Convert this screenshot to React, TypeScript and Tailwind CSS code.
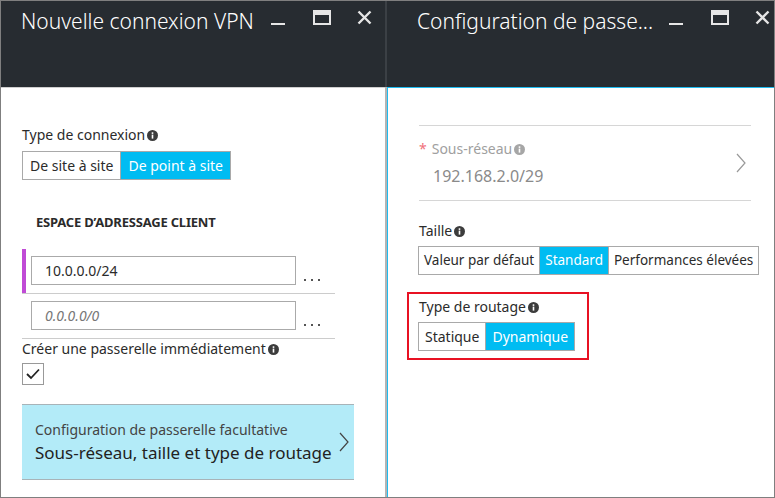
import React from "react";

const FONT = { fontFamily: '"Noto Sans", "Open Sans", sans-serif' };

function Info({ gray = false }: { gray?: boolean }) {
  return (
    <svg width="11" height="11" viewBox="0 0 11 11" className="inline-block ml-[2px]">
      <circle cx="5.5" cy="5.5" r="5.5" fill={gray ? "#a6a6a6" : "#3c3c3c"} />
      <rect x="4.7" y="4.6" width="1.6" height="4" fill="#fff" />
      <rect x="4.7" y="2.3" width="1.6" height="1.6" fill="#fff" />
    </svg>
  );
}

function Chevron({ color = "#333" }: { color?: string }) {
  return (
    <svg width="10" height="20" viewBox="0 0 10 20">
      <path d="M1 1 L9 10 L1 19" fill="none" stroke={color} strokeWidth="1.2" />
    </svg>
  );
}

function WindowButtons() {
  return (
    <div className="flex items-start shrink-0">
      <svg width="14" height="26" viewBox="0 0 14 26" className="mr-[28px]">
        <rect x="0" y="22" width="14" height="2" fill="#e6e6e6" />
      </svg>
      <svg width="18" height="26" viewBox="0 0 18 26" className="mr-[26px]">
        <rect x="1" y="10" width="16" height="13" fill="none" stroke="#e6e6e6" strokeWidth="2" />
        <rect x="1" y="10" width="16" height="4" fill="#e6e6e6" />
      </svg>
      <svg width="15" height="26" viewBox="0 0 15 26">
        <path d="M1.5 10.5 L13.5 22.5 M13.5 10.5 L1.5 22.5" stroke="#e6e6e6" strokeWidth="2.4" />
      </svg>
    </div>
  );
}

function Header({ title, pad }: { title: string; pad: string }) {
  return (
    <div className={"h-[86px] bg-[#272c31] flex items-start justify-between " + pad}>
      <div className="text-[21px] font-light text-white leading-[30px] mt-[5px] whitespace-nowrap">{title}</div>
      <WindowButtons />
    </div>
  );
}

function Segmented({ items, active, size = "text-[14px] px-[7px]" }: { items: string[]; active: number; size?: string }) {
  return (
    <div className="flex">
      {items.map((it, i) => (
        <div
          key={it}
          className={
            "h-[29px] flex items-center border border-[#a9a9a9] whitespace-nowrap " +
            size +
            (i > 0 ? " -ml-px" : "") +
            (i === active ? " bg-[#00bcf2] text-white" : " bg-white text-[#2b2b2b]")
          }
        >
          {it}
        </div>
      ))}
    </div>
  );
}

function Dots() {
  return (
    <div className="flex gap-[5px] items-end h-[28px] pb-[3px] ml-[8px]">
      <span className="w-[2px] h-[2px] bg-[#555]" />
      <span className="w-[2px] h-[2px] bg-[#555]" />
      <span className="w-[2px] h-[2px] bg-[#555]" />
    </div>
  );
}

function LeftPanel() {
  return (
    <div className="w-[384px] shrink-0 flex flex-col">
      <Header title="Nouvelle connexion VPN" pad="pl-[20px] pr-[13px]" />
      <div className="flex-1 border-t border-[#cfcfcf] bg-white pl-[21px] text-[#2b2b2b]">
        <div className="mt-[37px] text-[14px] leading-[20px] flex items-center">
          Type de connexion
          <Info />
        </div>
        <div className="mt-[6px]">
          <Segmented items={["De site à site", "De point à site"]} active={1} />
        </div>
        <div className="mt-[34px] ml-[14px] text-[13px] font-bold leading-[16px] tracking-[-0.2px]">
          ESPACE D’ADRESSAGE CLIENT
        </div>
        <div className="mt-[19px] w-[313px]">
          <div className="flex border-b border-[#cccccc] h-[45px]">
            <div className="w-[4px] bg-[#c04bd6]" />
            <div className="flex items-start pt-[7px] pl-[5px]">
              <div className="w-[265px] h-[29px] border border-[#aaaaaa] px-[13px] flex items-center text-[14px]">
                10.0.0.0/24
              </div>
              <Dots />
            </div>
          </div>
          <div className="flex border-b border-[#cccccc] h-[45px]">
            <div className="w-[4px]" />
            <div className="flex items-start pt-[7px] pl-[5px]">
              <div className="w-[265px] h-[29px] border border-[#aaaaaa] px-[13px] flex items-center text-[14px] italic text-[#777]">
                0.0.0.0/0
              </div>
              <Dots />
            </div>
          </div>
        </div>
        <div className="mt-0 text-[14px] leading-[20px] flex items-center">
          Créer une passerelle immédiatement
          <Info />
        </div>
        <div className="mt-[4px] w-[22px] h-[22px] border border-[#999] flex items-center justify-center">
          <svg width="14" height="12" viewBox="0 0 14 12">
            <path d="M1 6 L5 10 L13 1.5" fill="none" stroke="#222" strokeWidth="1.8" />
          </svg>
        </div>
        <div className="mt-[19px] w-[332px] h-[76px] bg-[#b3ebf8] border-y border-[#a8b3b8] flex items-center justify-between pl-[13px] pr-[5px]">
          <div>
            <div className="text-[14px] leading-[20px] text-[#444]">Configuration de passerelle facultative</div>
            <div className="text-[17px] leading-[24px] text-[#222] mt-[1px]">Sous-réseau, taille et type de routage</div>
          </div>
          <Chevron color="#444" />
        </div>
      </div>
    </div>
  );
}

function RightPanel() {
  return (
    <div className="flex-1 min-w-0 flex flex-col">
      <Header title="Configuration de passe..." pad="pl-[30px] pr-[4px]" />
      <div className="flex-1 border-t border-l border-[#1ebcf0] bg-white pl-[30px] text-[#2b2b2b]">
        <div className="mt-[37px] ml-px w-[332px] h-[76px] border-y border-[#d6d6d6] flex items-center justify-between pr-[5px]">
          <div>
            <div className="text-[14px] leading-[20px] flex items-center text-[#a0a0a0]">
              <span className="text-[#f0717a] mr-[5px]">*</span>
              Sous-réseau
              <Info gray />
            </div>
            <div className="text-[16px] leading-[22px] text-[#8a8a8a] ml-[14px] mt-[6px]">192.168.2.0/29</div>
          </div>
          <Chevron color="#999" />
        </div>
        <div className="mt-[20px] ml-px text-[14px] leading-[20px] flex items-center">
          Taille
          <Info />
        </div>
        <div className="mt-[5px]">
          <Segmented
            items={["Valeur par défaut", "Standard", "Performances élevées"]}
            active={1}
            size="text-[13.5px] px-[5px]"
          />
        </div>
        <div className="mt-[17px] -ml-[11px] w-[182px] h-[68px] border-2 border-[#e81123] pl-[9px]">
          <div className="mt-[3px] ml-px text-[14px] leading-[20px] flex items-center">
            Type de routage
            <Info />
          </div>
          <div className="mt-[5px]">
            <Segmented items={["Statique", "Dynamique"]} active={1} size="text-[14px] px-[6px]" />
          </div>
        </div>
      </div>
    </div>
  );
}

export default function App() {
  return (
    <div className="w-[775px] h-[498px] border border-[#7f7f7f] flex bg-white" style={FONT}>
      <LeftPanel />
      <div className="w-[2px] shrink-0 flex flex-col">
        <div className="h-[86px] bg-[#3b4045]" />
        <div className="flex-1 bg-[#b4b4b4]" />
      </div>
      <RightPanel />
    </div>
  );
}
